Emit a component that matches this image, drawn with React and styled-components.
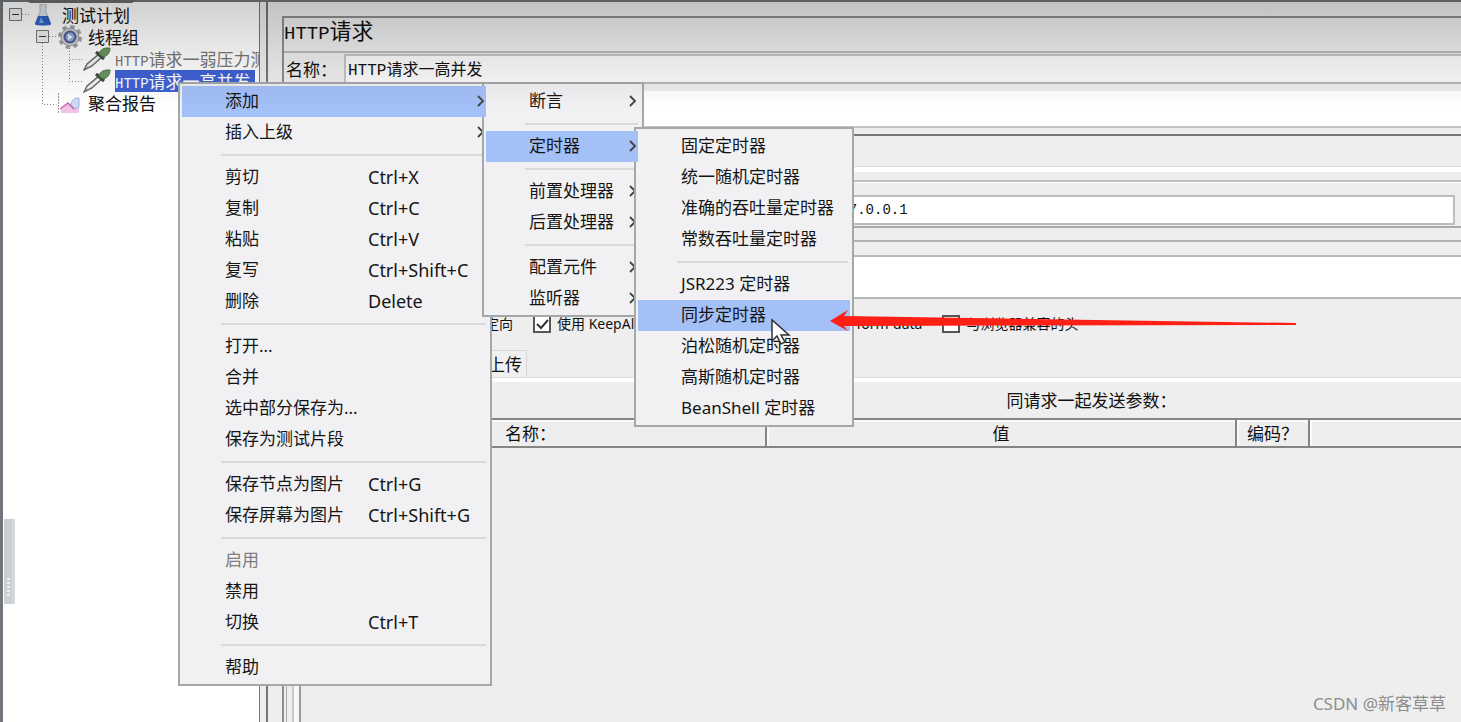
import React from "react";
import styled, { createGlobalStyle, css } from "styled-components";

const ui = '"Noto Sans", "Noto Sans CJK SC", sans-serif';
const cjk = '"Noto Sans CJK SC", sans-serif';

const GlobalStyle = createGlobalStyle`
  *, *::before, *::after { box-sizing: border-box; }
  html, body, #root { height: 100%; }
  body { margin: 0; overflow: hidden; background: #eee; color: #111; font: 17px/22px ${cjk}; }
  button, input { font: inherit; color: inherit; }
  h1, h2, ul, p { margin: 0; padding: 0; font-weight: 400; }
  ul { list-style: none; }
  svg { flex-shrink: 0; }
`;

const Window = styled.div`
  position: relative;
  display: flex;
  height: 100%;
  overflow: hidden;
`;

const Shade = styled.div`
  position: absolute;
  inset: 0 0 auto 0;
  height: 110px;
  background: linear-gradient(rgba(0, 0, 0, 0.19), rgba(0, 0, 0, 0.09) 50px, rgba(0, 0, 0, 0));
  pointer-events: none;
  z-index: 6;
`;

const TopTab = styled.div`
  position: absolute;
  top: -8px;
  left: 26px;
  width: 110px;
  height: 11px;
  border-radius: 8px;
  background: #585858;
  z-index: 7;
`;

const TreePanel = styled.nav`
  flex: 0 0 260px;
  overflow: hidden;
  padding-top: 2px;
  background: #fff;
  border: solid #73777a;
  border-width: 2px 1px 0 3px;
  border-left-color: #70767c;
`;

const TreeRow = styled.li`
  display: flex;
  align-items: center;
  height: 22px;
  padding-left: ${(p) => p.$indent}px;
  white-space: nowrap;
`;

const TreeLink = styled.a`
  display: block;
  height: 22px;
  line-height: 22px;
  margin-left: ${(p) => p.$gap || 0}px;
  padding-right: 4px;
  text-decoration: none;
  color: ${(p) => (p.$muted ? "#777" : p.$selected ? "#fff" : "#111")};
  background: ${(p) => (p.$selected ? "#3f62d4" : "transparent")};
`;

const Mono = styled.span`
  font-family: "Liberation Mono", monospace;
  font-size: ${(p) => p.$size || 14}px;
  line-height: 1;
`;

const TreeLines = styled.svg`
  position: absolute;
  left: 0;
  top: 0;
  z-index: 1;
  pointer-events: none;
`;

const DragHandle = styled.div`
  position: absolute;
  left: 4px;
  top: 519px;
  width: 11px;
  height: 85px;
  background: #cdced3;
  border-right: 3px solid #d6d7da;
  &::after {
    content: "";
    position: absolute;
    left: 3px;
    bottom: 6px;
    width: 3px;
    height: 20px;
    background: repeating-linear-gradient(#eceef0 0 2px, transparent 2px 4px);
  }
`;

const Splitter = styled.div`
  flex: 0 0 8px;
  background: #eee;
  border: solid #73777a;
  border-width: 2px 2px 0 0;
`;

const Editor = styled.main`
  flex: 1;
  min-width: 0;
  display: flex;
  flex-direction: column;
  padding: 14px 0 0 14px;
  border-top: 2px solid #73777a;
  background: #eee;
`;

const Frame = styled.section`
  flex: 1;
  display: flex;
  flex-direction: column;
  border: solid #8e8e8e;
  border-width: 2px 0 0 2px;
`;

const Title = styled.h1`
  height: 33px;
  font-size: 22px;
  line-height: 22px;
`;

const NameRow = styled.div`
  display: flex;
  height: 33px;
  border: solid #b9b9b9;
  border-width: 2px 0;
  background: #eee;
`;

const NameLabel = styled.label`
  flex: 0 0 60px;
  padding-left: 2px;
  line-height: 32px;
`;

const NameField = styled.div`
  flex: 1;
  display: flex;
  align-items: center;
  margin-top: 1px;
  padding: 4px 0 0 2px;
  border: solid #c4c4c4;
  border-width: 2px 0 0 2px;
  background: #fafafa;
`;

const NameInput = styled.input`
  flex: 1;
  min-width: 0;
  height: 24px;
  padding: 0;
  border: 0;
  outline: 0;
  background: transparent;
  font: 16px/24px "Liberation Mono", "Noto Sans CJK SC", monospace;
`;

const Comment = styled.div`
  height: 44px;
  border-top: 7px solid #eee;
  border-bottom: 2px solid #c4c4c4;
  background: #fff;
`;

const Gap = styled.div`
  flex: 0 0 auto;
  height: ${(p) => p.$h}px;
  background: ${(p) => p.$bg || "#eee"};
  ${(p) => p.$line && css`border-top: ${p.$thick || 2}px solid ${p.$line};`}
`;

const ServerRow = styled.div`
  display: flex;
  height: 46px;
  padding: 13px 6px 2px 500px;
  border-top: 2px solid #bfbfbf;
  box-shadow: inset 0 1px #fff;
`;

const ServerInput = styled.input`
  flex: 1;
  min-width: 0;
  height: 30px;
  padding: 0 0 0 46px;
  border: 2px solid #bdbdbf;
  outline: 0;
  background: #fff;
  font: 14px/24px "Liberation Mono", monospace;
`;

const PathBand = styled.div`
  height: 44px;
  border-top: 2px solid #b9b9b9;
  border-bottom: 2px solid #b9b9b9;
  background: #fff;
`;

const Options = styled.div`
  display: flex;
  align-items: center;
  gap: 20px;
  height: 49px;
  font: 14px/20px ${ui};
`;

const Check = styled.label`
  display: flex;
  align-items: center;
  justify-content: ${(p) => (p.$end ? "flex-end" : "flex-start")};
  gap: 6px;
  flex: 0 0 ${(p) => p.$width}px;
  white-space: nowrap;
`;

const CheckBox = styled.input`
  appearance: none;
  flex: 0 0 18px;
  height: 18px;
  margin: 0;
  border: 2px solid #555;
  background: #fff;
`;

const BoxWrap = styled.span`
  position: relative;
  display: flex;
  width: 18px;
  svg { position: absolute; inset: 0; pointer-events: none; }
`;

const TabRow = styled.div`
  display: flex;
  align-items: flex-end;
  height: 30px;
  padding-left: 150px;
  border-bottom: 1px solid #ddd;
`;

const Tab = styled.button`
  width: 93px;
  height: 27px;
  padding: 0 4px;
  border: 1px solid #d6d6d6;
  border-bottom: 0;
  background: #f0f0f0;
  text-align: right;
  line-height: 26px;
  white-space: nowrap;
`;

const Params = styled.div`
  flex: 1;
  display: flex;
  flex-direction: column;
  margin-left: 2px;
  border-left: 1px solid #aaa;
  border-top: 4px solid #fff;
`;

const ParamsInner = styled.div`
  flex: 1;
  margin-left: 5px;
  border-left: 2px solid #c9c9c9;
  box-shadow: inset 5px 0 #f7f7f7, inset 7px 0 #999;
`;

const ParamsTitle = styled.h2`
  height: 36px;
  padding-left: 428px;
  font-size: 17px;
  line-height: 36px;
  text-align: center;
`;

const Table = styled.table`
  width: 100%;
  border-collapse: collapse;
  table-layout: fixed;
`;

const Th = styled.th`
  width: ${(p) => (p.$width ? p.$width + "px" : "auto")};
  height: 28px;
  padding: 0;
  border: 2px solid #858585;
  background: #eee;
  box-shadow: inset 2px 2px #fafafa;
  font-weight: 400;
  line-height: 22px;
  &:last-child { border-right: 0; }
`;

const Menu = styled.div`
  position: absolute;
  left: ${(p) => p.$x}px;
  top: ${(p) => p.$y}px;
  width: ${(p) => p.$w}px;
  padding: 2px 2px 1px;
  border: 2px solid #a6a7a9;
  background: #f1f1f3;
  font: 17px/22px ${ui};
`;

/* An open item stays above the edge of the submenu it leads to. */
const Item = styled.button`
  display: flex;
  align-items: center;
  width: ${(p) => (p.$sub ? "calc(100% - 2px)" : "100%")};
  height: 31px;
  padding: 0 1px 2px 43px;
  border: 0;
  background: ${(p) => (p.$active ? "#a3c0f7" : "transparent")};
  color: ${(p) => (p.disabled ? "#7d7d7f" : "#151515")};
  text-align: left;
  white-space: nowrap;
  ${(p) => p.$sub && p.$active && css`position: relative; z-index: 5;`}
  svg { margin-left: auto; }
`;

const ItemLabel = styled.span`
  flex: 0 0 ${(p) => (p.$wide ? 143 : 90)}px;
`;

const Shortcut = styled.span`
  font-size: 18px;
`;

const Divider = styled.hr`
  height: 2px;
  margin: 6px 2px 6px 39px;
  border: 0;
  background: #d9d9db;
`;

const Overlay = styled.svg`
  position: absolute;
  left: ${(p) => p.$x}px;
  top: ${(p) => p.$y}px;
  z-index: 8;
  pointer-events: none;
`;

const Watermark = styled.p`
  position: absolute;
  right: 15px;
  bottom: 7px;
  color: #8d8d8f;
  font: 17px/22px ${ui};
`;

const Chevron = () => (
  <svg width="8" height="12" viewBox="0 0 8 12" fill="none" stroke="#444" strokeWidth="1.8">
    <path d="M1 1l5 5-5 5" />
  </svg>
);

const Dropper = () => (
  <svg width="28" height="24" viewBox="0 0 28 24">
    <path d="M1 23l3-6L16 7l3 3L9 19z" fill="#d9dcda" stroke="#6a6d6b" strokeWidth="1.4" />
    <path d="M5 19L16 10" stroke="#fff" strokeWidth="1.6" />
    <path d="M13 5l8 7" stroke="#3a4a3d" strokeWidth="3" />
    <path d="M16 7c0-3 4-6 8-6h3c0 4-2 8-7 9z" fill="#6a9560" stroke="#4c7346" />
  </svg>
);

const Flask = () => (
  <svg width="18" height="22" viewBox="0 0 18 22">
    <path d="M6 0h6v8l5 12H1L6 8z" fill="#dfe4ec" stroke="#b2b7c2" />
    <path d="M4 12h10l3 8c0 2-16 2-16 0z" fill="#2f63c4" />
    <path d="M7 13l-2 6h5z" fill="#7fa7ec" />
  </svg>
);

const Gear = () => (
  <svg width="26" height="24" viewBox="0 0 26 24">
    <circle cx="13" cy="12" r="10" fill="none" stroke="#a2a4a9" strokeWidth="4" strokeDasharray="4.2 3.65" />
    <circle cx="13" cy="12" r="9" fill="#cfd1d5" stroke="#97999f" />
    <circle cx="13" cy="12" r="5.5" fill="#8fa9dc" stroke="#4d5c90" strokeWidth="2" />
    <path d="M11 9l5 3-5 3z" fill="#f0f5ff" />
  </svg>
);

const Report = () => (
  <svg width="23" height="23" viewBox="0 0 23 23">
    <path d="M1.500 1v21" fill="none" stroke="#999" strokeDasharray="2 1" />
    <path d="M4 16l7-5 5 4 6-3v9H4z" fill="#f0c4e4" />
    <path d="M14 12c1-4 3-6 8-6v9l-5 2z" fill="#cfdcf6" stroke="#9db2e4" />
    <path d="M3 17l8-6 6 6" fill="none" stroke="#c46aae" strokeWidth="1.5" />
  </svg>
);

const addItems = [
  { t: "断言", sub: true }, null,
  { t: "定时器", sub: true, active: true }, null,
  { t: "前置处理器", sub: true }, { t: "后置处理器", sub: true }, null,
  { t: "配置元件", sub: true }, { t: "监听器", sub: true },
];

const mainItems = [
  { t: "添加", sub: true, active: true }, { t: "插入上级", sub: true }, null,
  { t: "剪切", k: "Ctrl+X" }, { t: "复制", k: "Ctrl+C" }, { t: "粘贴", k: "Ctrl+V" },
  { t: "复写", k: "Ctrl+Shift+C" }, { t: "删除", k: "Delete" }, null,
  { t: "打开..." }, { t: "合并" }, { t: "选中部分保存为..." }, { t: "保存为测试片段" }, null,
  { t: "保存节点为图片", k: "Ctrl+G" }, { t: "保存屏幕为图片", k: "Ctrl+Shift+G" }, null,
  { t: "启用", off: true }, { t: "禁用" }, { t: "切换", k: "Ctrl+T" }, null, { t: "帮助" },
];

const timerItems = [
  { t: "固定定时器" }, { t: "统一随机定时器" }, { t: "准确的吞吐量定时器" }, { t: "常数吞吐量定时器" }, null,
  { t: "JSR223 定时器" }, { t: "同步定时器", active: true }, { t: "泊松随机定时器" },
  { t: "高斯随机定时器" }, { t: "BeanShell 定时器" },
];

function PopupMenu({ items, ...place }) {
  return (
    <Menu role="menu" {...place}>
      {items.map((it, i) =>
        it ? (
          <Item key={i} role="menuitem" $sub={it.sub} $active={it.active} disabled={it.off}>
            <ItemLabel $wide={!!it.k}>{it.t}</ItemLabel>
            {it.k && <Shortcut>{it.k}</Shortcut>}
            {it.sub && <Chevron />}
          </Item>
        ) : (
          <Divider key={i} />
        )
      )}
    </Menu>
  );
}

export default function App() {
  return (
    <Window>
      <GlobalStyle />
      <TreePanel>
        <ul>
          <TreeRow $indent={31}><Flask /><TreeLink href="#plan" $gap={10}>测试计划</TreeLink></TreeRow>
          <TreeRow $indent={54}><Gear /><TreeLink href="#group" $gap={5}>线程组</TreeLink></TreeRow>
          <TreeRow $indent={80}><Dropper /><TreeLink href="#low" $gap={4} $muted><Mono>HTTP</Mono>请求一弱压力测试</TreeLink></TreeRow>
          <TreeRow $indent={80}><Dropper /><TreeLink href="#high" $gap={4} $selected><Mono>HTTP</Mono>请求一高并发</TreeLink></TreeRow>
          <TreeRow $indent={54}><Report /><TreeLink href="#report" $gap={8}>聚合报告</TreeLink></TreeRow>
        </ul>
      </TreePanel>
      <TreeLines width="90" height="120" fill="none" stroke="#8a8a8a">
        <path d="M22 14.5h9M49 36.5h9M42.5 43v61.5h14M69.5 48v33.5h14M69.5 59.5h14" strokeDasharray="1 2" />
        <path d="M9.500 8.500h12v12h-12zM36.500 30.500h12v12h-12z" fill="#f2f2f2" stroke="#777" />
        <path d="M12 14.500h7M39 36.500h7" stroke="#334" />
      </TreeLines>
      <DragHandle />
      <Splitter />
      <Editor>
        <Frame>
          <Title><Mono $size={19}>HTTP</Mono>请求</Title>
          <NameRow>
            <NameLabel htmlFor="name">名称：</NameLabel>
            <NameField><NameInput id="name" defaultValue="HTTP请求一高并发" /></NameField>
          </NameRow>
          <Comment />
          <Gap $h={6} />
          <Gap $h={32} $line="#777" />
          <Gap $h={6} $line="#ddd" $thick={1} $bg="#fff" />
          <Gap $h={8} />
          <ServerRow><ServerInput aria-label="服务器" defaultValue="127.0.0.1" /></ServerRow>
          <Gap $h={14} $line="#aaa" />
          <Gap $h={15} $line="#b3b3b3" />
          <PathBand />
          <Options>
            <Check $width={229} $end><CheckBox type="checkbox" />跟随重定向</Check>
            <Check $width={136}>
              <BoxWrap>
                <CheckBox type="checkbox" defaultChecked />
                <svg width="18" height="18" fill="none" stroke="#333" strokeWidth="2"><path d="M4 9l4 4 7-8" /></svg>
              </BoxWrap>
              使用 KeepAlive
            </Check>
            <Check $width={223} $end><CheckBox type="checkbox" />对POST使用multipart/form-data</Check>
            <Check $width={140}><CheckBox type="checkbox" />与浏览器兼容的头</Check>
          </Options>
          <TabRow><Tab>文件上传</Tab></TabRow>
          <Params>
            <ParamsInner>
              <ParamsTitle>同请求一起发送参数：</ParamsTitle>
              <Table>
                <thead>
                  <tr><Th $width={471}>名称：</Th><Th $width={470}>值</Th><Th $width={73}>编码？</Th><Th aria-label="其他" /></tr>
                </thead>
              </Table>
            </ParamsInner>
          </Params>
        </Frame>
      </Editor>
      <PopupMenu items={mainItems} $x={178} $y={82} $w={314} />
      <PopupMenu items={addItems} $x={482} $y={82} $w={162} />
      <PopupMenu items={timerItems} $x={634} $y={127} $w={220} />
      <Overlay $x={770} $y={318} width="22" height="28">
        <path d="M2 2v21l5-5 4 8 4-2-4-7h8z" fill="#fff" stroke="#333" strokeWidth="1.5" />
      </Overlay>
      <Overlay $x={828} $y={308} width="470" height="26" fill="#ff2015">
        <path d="M2 13L20 2l-4 6 452 7v2L16 18l4 5z" />
      </Overlay>
      <Shade />
      <TopTab />
      <Watermark>CSDN @新客草草</Watermark>
    </Window>
  );
}
